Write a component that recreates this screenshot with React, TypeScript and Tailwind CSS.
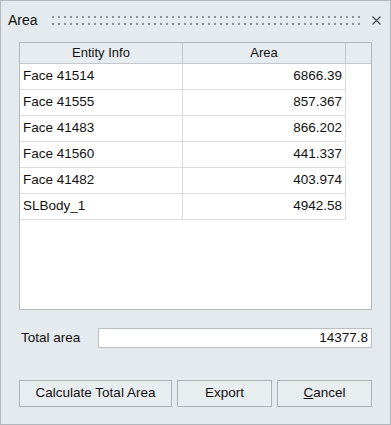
const rows = [
  { name: "Face 41514", area: "6866.39" },
  { name: "Face 41555", area: "857.367" },
  { name: "Face 41483", area: "866.202" },
  { name: "Face 41560", area: "441.337" },
  { name: "Face 41482", area: "403.974" },
  { name: "SLBody_1", area: "4942.58" },
];

function Gripper() {
  return (
    <svg width="308" height="9" className="block shrink-0">
      <defs>
        <pattern id="grip" width="6" height="9" patternUnits="userSpaceOnUse">
          <rect x="0" y="0" width="2" height="2" fill="#8c9298" />
          <rect x="0" y="7" width="2" height="2" fill="#8c9298" />
        </pattern>
      </defs>
      <rect x="0" y="0" width="308" height="9" fill="url(#grip)" />
    </svg>
  );
}

export default function App() {
  return (
    <div className="w-[391px] h-[425px] border border-[#b3b8bc] bg-[#e4eaee] flex flex-col font-['Liberation_Sans',Arial,sans-serif] text-[13px] text-[#111111]">
      {/* title bar */}
      <div className="h-[38px] flex items-center">
        <span className="w-[51px] pl-[7px] text-[14px] leading-none">Area</span>
        <Gripper />
        <svg width="9" height="9" className="ml-[12px] block shrink-0">
          <path d="M0.5 0.5 L8.5 8.5 M8.5 0.5 L0.5 8.5" stroke="#4a4f54" strokeWidth="1.2" />
        </svg>
      </div>

      {/* table */}
      <div className="mt-[3px] mx-[18px] h-[268px] border border-[#b3b8bc] bg-white flex flex-col">
        <div className="h-[21px] flex border-b border-[#c3c8cc] bg-[#e6ecef]">
          <div className="w-[163px] border-r border-[#c3c8cc] flex items-center justify-center">Entity Info</div>
          <div className="w-[163px] border-r border-[#c3c8cc] flex items-center justify-center">Area</div>
          <div className="flex-1" />
        </div>
        {rows.map((r) => (
          <div key={r.name} className="w-[326px] h-[26px] flex border-b border-r border-[#dcdcdc] text-[13.5px]">
            <div className="w-[163px] border-r border-[#dcdcdc] flex items-center pl-[3px]">{r.name}</div>
            <div className="flex-1 flex items-center justify-end pr-[3px]">{r.area}</div>
          </div>
        ))}
      </div>

      {/* total */}
      <div className="mt-[18px] mx-[18px] h-[20px] flex items-center text-[13.5px]">
        <span className="w-[79px] pl-[2px]">Total area</span>
        <div className="flex-1 h-[20px] border border-[#b9bec2] bg-white flex items-center justify-end pr-[3px]">
          14377.8
        </div>
      </div>

      {/* buttons */}
      <div className="mt-[32px] mx-[18px] h-[27px] flex gap-[5px] text-[13.5px]">
        <button className="w-[153px] h-[27px] border border-[#adb2b6] bg-[#e8edf0]">Calculate Total Area</button>
        <button className="w-[95px] h-[27px] border border-[#adb2b6] bg-[#e8edf0]">Export</button>
        <button className="w-[95px] h-[27px] border border-[#adb2b6] bg-[#e8edf0]">
          <span className="underline">C</span>ancel
        </button>
      </div>
    </div>
  );
}
